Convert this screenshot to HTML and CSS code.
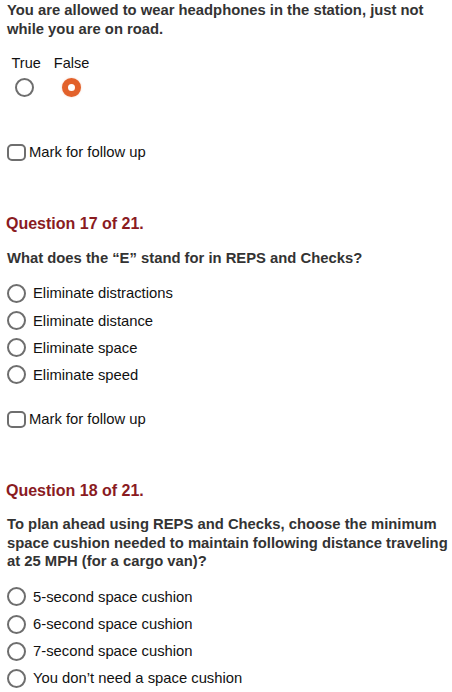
FILE: index.html
```html
<!DOCTYPE html>
<html lang="en">
<head>
<meta charset="utf-8">
<title>Quiz</title>
<link rel="stylesheet" href="styles.css">
</head>
<body>
<main class="quiz">
  <section class="question first">
    <p class="qtext">You are allowed to wear headphones in the station, just not while you are on road.</p>
    <div class="tf">
      <div class="tf-col"><span class="tf-label">True</span><span class="radio"></span></div>
      <div class="tf-col"><span class="tf-label">False</span><span class="radio selected"></span></div>
    </div>
    <div class="follow"><span class="checkbox"></span><span>Mark for follow up</span></div>
  </section>

  <section class="question">
    <h2 class="qhead">Question 17 of 21.</h2>
    <p class="qtext">What does the “E” stand for in REPS and Checks?</p>
    <ul class="options">
      <li><span class="radio"></span><span>Eliminate distractions</span></li>
      <li><span class="radio"></span><span>Eliminate distance</span></li>
      <li><span class="radio"></span><span>Eliminate space</span></li>
      <li><span class="radio"></span><span>Eliminate speed</span></li>
    </ul>
    <div class="follow"><span class="checkbox"></span><span>Mark for follow up</span></div>
  </section>

  <section class="question">
    <h2 class="qhead">Question 18 of 21.</h2>
    <p class="qtext">To plan ahead using REPS and Checks, choose the minimum space cushion needed to maintain following distance traveling at 25 MPH (for a cargo van)?</p>
    <ul class="options">
      <li><span class="radio"></span><span>5-second space cushion</span></li>
      <li><span class="radio"></span><span>6-second space cushion</span></li>
      <li><span class="radio"></span><span>7-second space cushion</span></li>
      <li><span class="radio"></span><span>You don’t need a space cushion</span></li>
    </ul>
  </section>
</main>
</body>
</html>
```

FILE: styles.css
```css
* { box-sizing: border-box; }

html, body {
  margin: 0;
  padding: 0;
  background: #ffffff;
}

body {
  font-family: "Liberation Sans", Arial, sans-serif;
  font-size: 14.8px;
  color: #111111;
  width: 452px;
  overflow: hidden;
}

.quiz {
  padding: 1px 0 0 7px;
}

.question {
  display: flex;
  flex-direction: column;
  align-items: flex-start;
}

.qtext {
  margin: 0;
  font-weight: bold;
  font-size: 14.8px;
  line-height: 18.6px;
  color: #333333;
}

.qhead {
  margin: 52px 0 14.5px -1px;
  font-size: 16px;
  line-height: 20px;
  font-weight: bold;
  color: #8a1b1f;
}

.tf {
  display: flex;
  gap: 13px;
  margin: 16px 0 0 4.5px;
}

.tf-col {
  display: flex;
  flex-direction: column;
  align-items: center;
  gap: 6px;
}

.tf-label {
  line-height: 18px;
  font-size: 14.5px;
}

.radio {
  display: block;
  flex: none;
  width: 19px;
  height: 19px;
  border-radius: 50%;
  border: 2px solid #6e6e6e;
  background: #ffffff;
}

.tf-col:first-child .radio {
  margin-right: 4px;
}

.radio.selected {
  border: 6px solid #e2612a;
  box-shadow: 0 0 2px rgba(226, 97, 42, 0.35);
}

.follow {
  display: flex;
  align-items: center;
  gap: 3px;
  line-height: 19px;
  margin-top: 46px;
}

.options + .follow {
  margin-top: 21px;
}

.checkbox {
  display: block;
  width: 19px;
  height: 17px;
  border: 2px solid #6e6e6e;
  border-radius: 5px;
  background: #ffffff;
}

.options {
  list-style: none;
  margin: 12.5px 0 0 0;
  padding: 0;
}

.options li {
  display: flex;
  align-items: center;
  gap: 7px;
  height: 27.2px;
}
```
